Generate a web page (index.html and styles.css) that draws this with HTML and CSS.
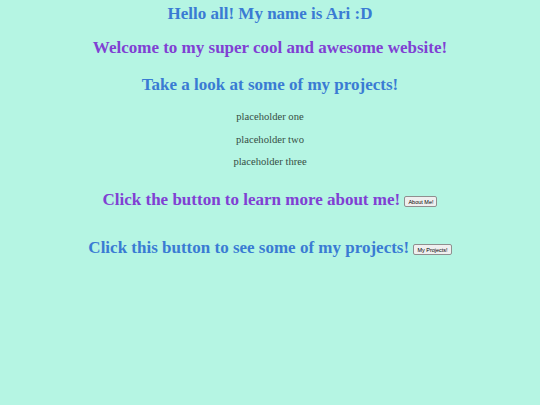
FILE: index.html
```html
<!DOCTYPE html>
<html>
<head>
<meta charset="utf-8">
<link rel="stylesheet" href="styles.css">
</head>
<body>
<h1 class="title blue">Hello all! My name is Ari :D</h1>
<h2 class="welcome purple">Welcome to my super cool and awesome website!</h2>
<h2 class="take blue">Take a look at some of my projects!</h2>
<div class="list">
  <p>placeholder one</p>
  <p>placeholder two</p>
  <p>placeholder three</p>
</div>
<h2 class="click1 purple">Click the button to learn more about me! <button class="btn">About Me!</button></h2>
<h2 class="click2 blue">Click this button to see some of my projects! <button class="btn">My Projects!</button></h2>
</body>
</html>
```
FILE: styles.css
```css
html, body {
  margin: 0;
  padding: 0;
  background: #b5f5e3;
}
body {
  font-family: "Liberation Serif", "Times New Roman", serif;
  text-align: center;
  padding-top: 4px;
}
h1, h2 {
  margin: 0;
  font-size: 17px;
  font-weight: bold;
  line-height: 20px;
}
.blue { color: #3a7bd3; }
.purple { color: #8040d3; }
.welcome { margin-top: 14px; }
.take { margin-top: 17px; }
.list { margin-top: 11px; }
.list p {
  margin: 0;
  font-size: 10.6px;
  line-height: 22.5px;
  color: #354f45;
}
.click1 { margin-top: 16px; }
.click2 { margin-top: 28px; }
.btn {
  font-family: "Liberation Sans", Arial, sans-serif;
  font-size: 5.5px;
  padding: 1.5px 3px;
  background: #efefef;
  color: #000;
  border: 1px solid #8f8f8f;
  border-radius: 2px;
  vertical-align: 1px;
}
```
